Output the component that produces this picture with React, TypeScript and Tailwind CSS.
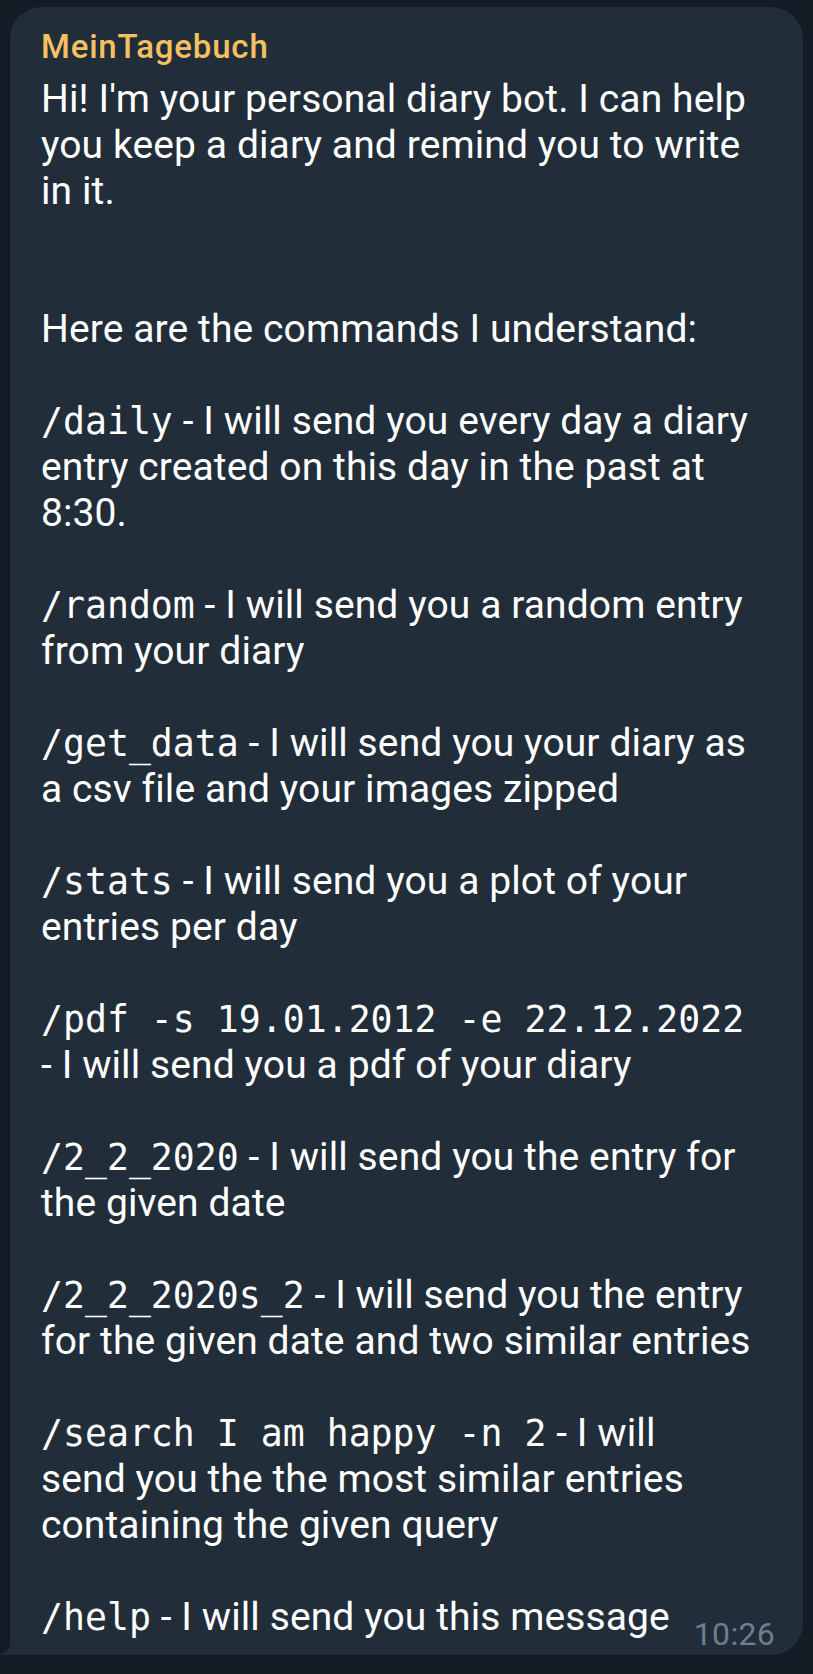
import React from 'react';

const Cmd: React.FC<{ children: React.ReactNode }> = ({ children }) => (
  <span className="font-['DejaVu_Sans_Mono',monospace] text-[36.5px] leading-none tracking-normal whitespace-pre">{children}</span>
);

const App: React.FC = () => {
  return (
    <div className="w-[813px] h-[1674px] bg-[#131c25] overflow-hidden font-['Roboto',sans-serif] pt-[7px] px-[10px]">
      {/* message bubble */}
      <div className="relative bg-[#222d3a] rounded-[32px] rounded-bl-none h-[1648px] pl-[31px] pr-[50px] pt-[20px]">
        {/* tail */}
        <svg className="absolute -left-[10px] bottom-0" width="11" height="16" viewBox="0 0 11 16">
          <path d="M11 0 C11 9 6 14 0 16 L11 16 Z" fill="#222d3a" />
        </svg>

        <div className="text-[#f5c062] text-[33px] tracking-[0.8px] font-medium leading-[40px]">MeinTagebuch</div>

        <div className="mt-[9px] text-white text-[39px] tracking-[0.1px] leading-[46px]">
          <p>Hi! I'm your personal diary bot. I can help you keep a diary and remind you to write in it.</p>

          <p className="mt-[92px]">Here are the commands I understand:</p>

          <p className="mt-[46px]">
            <Cmd>/daily</Cmd> - I will send you every day a diary entry created on this day in the past at 8:30.
          </p>

          <p className="mt-[46px]">
            <Cmd>/random</Cmd> - I will send you a random entry from your diary
          </p>

          <p className="mt-[46px]">
            <Cmd>/get_data</Cmd> - I will send you your diary as a csv file and your images zipped
          </p>

          <p className="mt-[46px]">
            <Cmd>/stats</Cmd> - I will send you a plot of your entries per day
          </p>

          <p className="mt-[46px]">
            <Cmd>/pdf -s 19.01.2012 -e 22.12.2022</Cmd> - I will send you a pdf of your diary
          </p>

          <p className="mt-[46px]">
            <Cmd>/2_2_2020</Cmd> - I will send you the entry for the given date
          </p>

          <p className="mt-[46px]">
            <Cmd>/2_2_2020s_2</Cmd> - I will send you the entry for the given date and two similar entries
          </p>

          <p className="mt-[46px]">
            <Cmd>/search I am happy -n 2</Cmd> - I will send{'\u00a0'}you the the most similar entries containing the given query
          </p>

          <div className="mt-[46px] -mr-[22px] flex items-end justify-between">
            <p>
              <Cmd>/help</Cmd> - I will send you this message
            </p>
            <span className="text-[#6c7e90] text-[32px] tracking-[0.3px] leading-[36px] -mb-[12px]">10:26</span>
          </div>
        </div>
      </div>
    </div>
  );
};

export default App;
